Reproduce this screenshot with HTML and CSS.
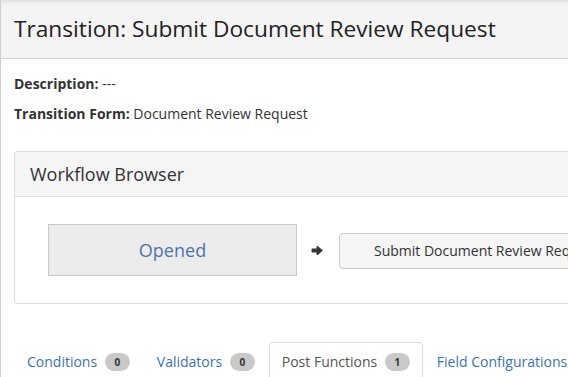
FILE: index.html
```html
<!DOCTYPE html>
<html lang="en">
<head>
  <meta charset="UTF-8" />
  <title>Transition: Submit Document Review Request</title>
  <link rel="stylesheet" href="styles.css">
</head>
<body>
  <div class="page">
    <header class="page-header">
      <h1>Transition: Submit Document Review Request</h1>
    </header>

    <div class="content">
      <p class="meta"><strong>Description:</strong> ---</p>
      <p class="meta"><strong>Transition Form:</strong> Document Review Request</p>

      <section class="panel">
        <div class="panel-heading">Workflow Browser</div>
        <div class="panel-body">
          <div class="status-box">Opened</div>
          <svg class="arrow" width="12" height="11" viewBox="0 0 12 11">
            <path d="M1.2 4.2h5V1.6l4.8 3.9-4.8 3.9V6.8h-5z" fill="#333" stroke="#333" stroke-width="1.3" stroke-linejoin="round"/>
          </svg>
          <div class="transition-btn">Submit Document Review Request</div>
        </div>
      </section>

      <ul class="tabs">
        <li class="tab">Conditions <span class="badge">0</span></li>
        <li class="tab">Validators <span class="badge">0</span></li>
        <li class="tab active">Post Functions <span class="badge">1</span></li>
        <li class="tab">Field Configurations</li>
      </ul>
    </div>
  </div>
</body>
</html>
```

FILE: styles.css
```css
* {
  margin: 0;
  padding: 0;
  box-sizing: border-box;
}

html, body {
  height: 100%;
  overflow: hidden;
}

body {
  font-family: 'Open Sans', 'Liberation Sans', sans-serif;
  color: #333;
  background: #fff;
  font-size: 14px;
}

.page {
  min-height: 100%;
  border-left: 1px solid #cfcfcf;
  width: 720px;
}

.page-header {
  background: #f4f4f4;
  border-bottom: 1px solid #d0d0d0;
  height: 59px;
  padding: 13px 13px 0;
  box-shadow: inset 0 4px 4px -3px rgba(0,0,0,0.12);
}

.page-header h1 {
  font-size: 22.7px;
  font-weight: 400;
  color: #222;
  line-height: 32px;
}

.content {
  padding: 15px 13px 0;
}

.meta {
  line-height: 20px;
  margin-bottom: 10px;
  color: #333;
}

.meta strong {
  font-weight: 700;
}

.panel {
  margin-top: 27px;
  border: 1px solid #ddd;
  border-radius: 4px;
  width: 660px;
}

.panel-heading {
  background: #f5f5f5;
  border-bottom: 1px solid #ddd;
  height: 45px;
  padding: 0 15px;
  font-size: 18px;
  line-height: 44px;
  color: #333;
  border-radius: 4px 4px 0 0;
}

.panel-body {
  display: flex;
  align-items: center;
  padding: 27px 33px 27px;
}

.status-box {
  width: 249px;
  height: 52px;
  background: #ececec;
  border: 1px solid #c8c8c8;
  color: #4c74ae;
  font-size: 18px;
  text-align: center;
  line-height: 50px;
}

.arrow {
  margin: 0 16px 0 14px;
}

.transition-btn {
  height: 36px;
  border: 1px solid #ccc;
  border-radius: 4px;
  background: #f5f5f5;
  padding: 0 34px;
  line-height: 34px;
  font-size: 14px;
  color: #333;
  white-space: nowrap;
  margin-top: 1px;
}

.tabs {
  list-style: none;
  display: flex;
  margin-top: 38px;
  padding-left: 0;
}

.tab {
  height: 40px;
  padding: 0 12px;
  line-height: 37px;
  font-size: 14px;
  color: #3b73af;
  border: 1px solid transparent;
  border-bottom: none;
  border-radius: 4px 4px 0 0;
  white-space: nowrap;
  margin-right: 1px;
}

.tab.active {
  border-color: #ddd;
  color: #555;
}

.badge {
  display: inline-block;
  background: #c9c9c9;
  color: #333;
  font-size: 10px;
  font-weight: 700;
  min-width: 25px;
  height: 18px;
  line-height: 18px;
  text-align: center;
  border-radius: 9px;
  margin-left: 4px;
  vertical-align: 1px;
}
```
